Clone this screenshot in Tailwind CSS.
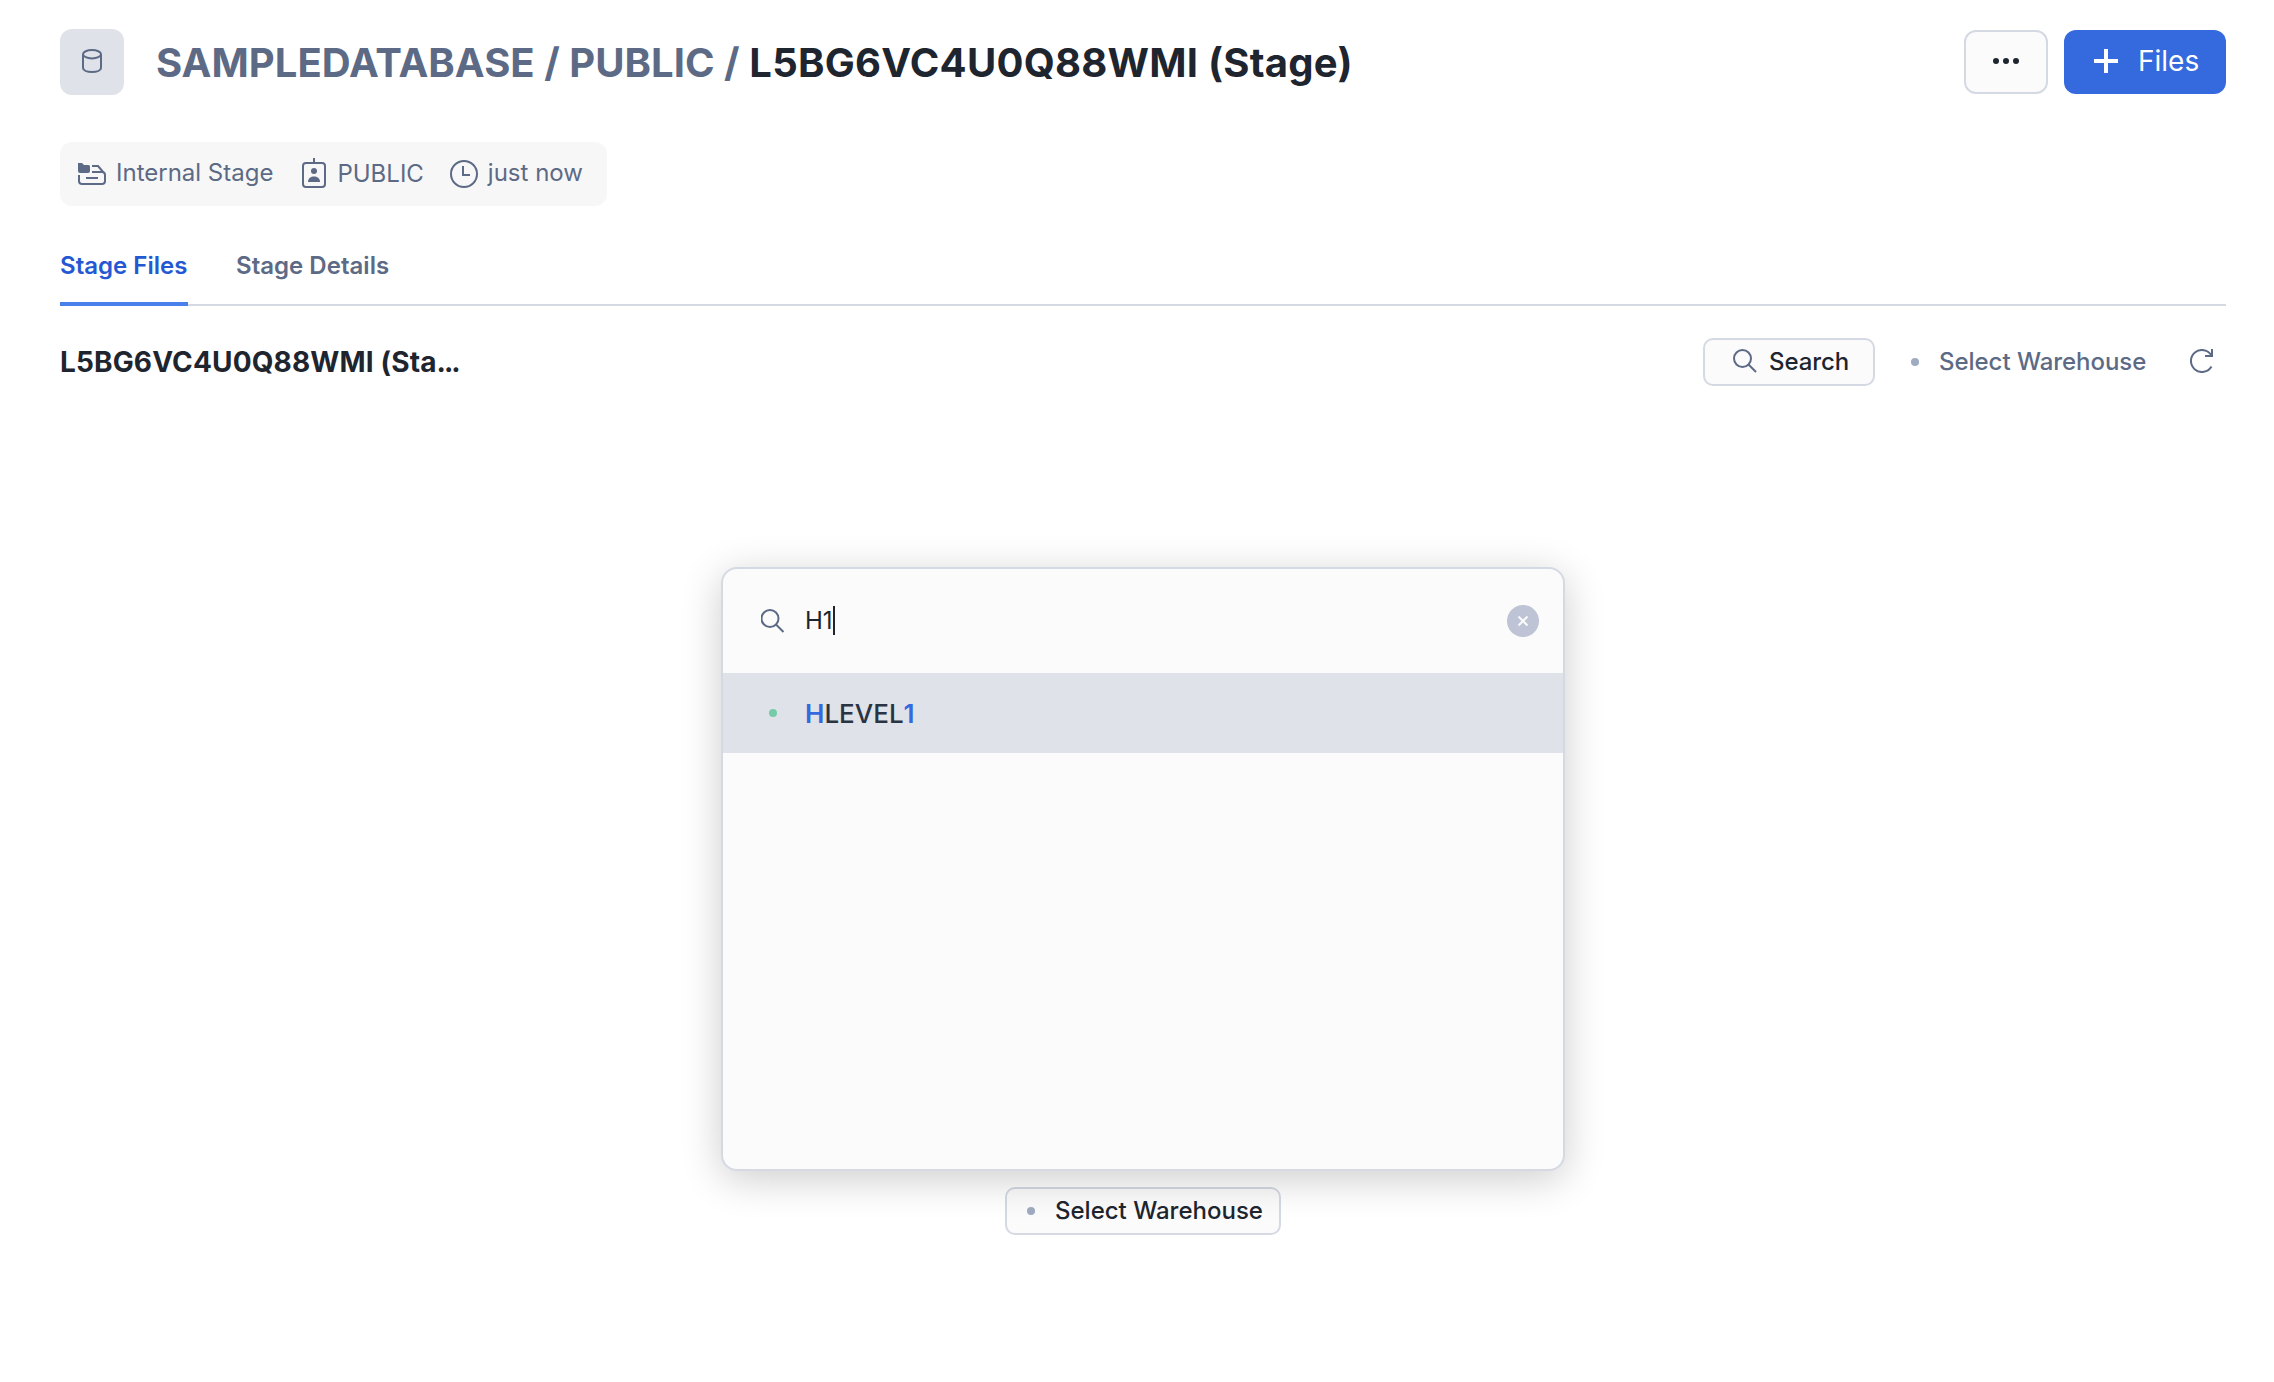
<!DOCTYPE html>
<html lang="en">
<head>
<meta charset="utf-8">
<title>Stage</title>
<script src="https://cdn.jsdelivr.net/npm/@tailwindcss/browser@4"></script>
</head>
<body class="bg-white font-[Inter,sans-serif] text-[#1e252f] text-2xl">
<div class="relative w-[2274px] h-[1382px] overflow-hidden px-12 pl-[60px] flex flex-col">
  <header class="mt-[29px] h-[66px] flex items-center">
    <div class="w-16 h-[66px] rounded-xl bg-[#dfe2e9] flex items-center justify-center pb-0.5">
      <svg class="w-5 h-6" viewBox="0 0 20 24" fill="none" stroke="#5d6a85" stroke-width="2"><ellipse cx="10" cy="5.200" rx="9" ry="4.200"/><path d="M1 5v13.500c0 2.800 4 4.500 9 4.500s9-1.700 9-4.500V5"/></svg>
    </div>
    <h1 class="ml-8 pt-0.5 text-[40px] leading-[48px] font-bold tracking-[0.25px] whitespace-nowrap"><span class="text-[#5d6a85] tracking-[0.03px]">SAMPLEDATABASE / PUBLIC /</span> L5BG6VC4U0Q88WMI (Stage)</h1>
    <div class="ml-auto flex gap-4 h-16">
      <button class="w-21 h-16 rounded-xl border-2 border-[#d5d9e4] bg-[#fbfbfb] flex items-center justify-center pb-0.5">
        <svg width="26" height="6" viewBox="0 0 26 6" fill="#1e252f"><circle cx="3" cy="3" r="3"/><circle cx="13" cy="3" r="3"/><circle cx="23" cy="3" r="3"/></svg>
      </button>
      <button class="w-[162px] h-16 rounded-xl bg-[#3569de] text-white flex items-center pl-[30px] pb-0.5">
        <svg width="24" height="24" viewBox="0 0 24 24" stroke="#fff" stroke-width="4"><path d="M12 0v24M0 12h24"/></svg>
        <span class="ml-5 pt-0.5 text-[28px]">Files</span>
      </button>
    </div>
  </header>

  <div class="mt-[47px] w-[547px] h-16 rounded-xl bg-[#f7f7f7] text-[#5d6a85] flex items-center pl-[18px] whitespace-nowrap">
    <svg width="28" height="24" viewBox="0 0 28 24" fill="none" stroke="#5d6a85" stroke-width="2"><path d="M0 1h4l2 2h4.500a1.500 1.500 0 0 1 1.500 1.500V9a2 2 0 0 1-2 2H2a2 2 0 0 1-2-2z" fill="#5d6a85" stroke="none"/><path d="M1 13v6a3 3 0 0 0 3 3h20a3 3 0 0 0 3-3v-6a3 3 0 0 0-3-3H14M14 4h6l6 7M8 16h12"/></svg>
    <span class="ml-2.5 pb-0.5">Internal Stage</span>
    <svg class="ml-[29px] -mt-0.5" width="24" height="32" viewBox="0 0 24 32" fill="none" stroke="#5d6a85" stroke-width="2"><rect x="1" y="6" width="22" height="24" rx="3"/><path d="M12 1v5"/><circle cx="12" cy="14" r="3" fill="#5d6a85" stroke="none"/><path d="M6 25c0-4 3-5.500 6-5.500s6 1.500 6 5.500z" fill="#5d6a85" stroke="none"/></svg>
    <span class="ml-[11px]">PUBLIC</span>
    <svg class="ml-[26px]" width="28" height="28" viewBox="0 0 28 28" fill="none" stroke="#5d6a85" stroke-width="2"><circle cx="14" cy="14" r="13"/><path d="M13 6v9h7"/></svg>
    <span class="ml-2.5 pb-0.5">just now</span>
  </div>

  <nav class="mt-[36px] h-16 flex gap-12 border-b-2 border-[#d5d9e4] font-semibold tracking-[0.02px] whitespace-nowrap">
    <div class="h-16 w-32 border-b-4 border-[#4a80ec] text-[#2458d3] pt-2">Stage Files</div>
    <div class="text-[#5d6a85] pt-2">Stage Details</div>
  </nav>

  <div class="mt-8 h-12 flex items-center whitespace-nowrap">
    <h2 class="pt-0.5 text-[28px] font-bold tracking-[0.14px]">L5BG6VC4U0Q88WMI (Sta<span class="tracking-[-2px]">...</span></h2>
    <button class="ml-auto w-[172px] h-12 rounded-[10px] border-2 border-[#d5d9e4] bg-[#fbfbfb] font-medium flex items-center pl-7">
      <svg class="-mt-0.5" width="24" height="24" viewBox="0 0 24 24" fill="none" stroke="#5d6a85" stroke-width="2"><circle cx="9.500" cy="9.500" r="8.500"/><path d="M15.500 15.500l7.500 7.500"/></svg>
      <span class="ml-3 tracking-[-0.1px]">Search</span>
    </button>
    <span class="ml-9 size-2 rounded-full bg-[#9fabc1]"></span>
    <span class="ml-5 w-[207px] font-medium tracking-[-0.04px] text-[#5d6a85]">Select Warehouse</span>
    <svg class="ml-11 mr-3 -mt-0.5" width="24" height="24" viewBox="0 0 24 24" fill="none" stroke="#5d6a85" stroke-width="2"><path d="M21.500 17.500A11 11 0 1 1 21.500 6.500M22 0v7h-7"/></svg>
  </div>

  <button class="absolute left-[1005px] top-[1187px] w-[276px] h-12 rounded-[10px] border-2 border-[#d5d9e4] bg-[#fbfbfb] font-medium flex items-center pl-5 whitespace-nowrap">
    <span class="size-2 rounded-full bg-[#9fabc1]"></span><span class="ml-5">Select Warehouse</span>
  </button>

  <div class="absolute left-[721px] top-[567px] w-[844px] h-[604px] rounded-2xl border-2 border-[#d5d9e4] bg-[#fbfbfb] shadow-[0_8px_40px_rgba(0,0,0,0.2)]">
    <div class="h-[104px] flex items-center pl-[38px] pr-6">
      <svg width="24" height="24" viewBox="0 0 24 24" fill="none" stroke="#5d6a85" stroke-width="2"><circle cx="9" cy="9.500" r="8.500"/><path d="M15 15.500l7.500 7.500"/></svg>
      <span class="ml-5">H1</span><span class="mb-0.5 w-0.5 h-[29px] bg-[#1e252f]"></span>
      <span class="ml-auto size-8 rounded-full bg-[#bec3d5] flex items-center justify-center"><svg width="12" height="12" viewBox="0 0 12 12" stroke="#fbfbfb" stroke-width="2"><path d="M1.500 1.500l9 9M10.500 1.500l-9 9"/></svg></span>
    </div>
    <div class="h-20 bg-[#dfe2e9] flex items-center pl-[46px] text-[26px] text-[#2a3342] font-medium">
      <span class="size-2 rounded-full bg-[#75cba8]"></span>
      <span class="ml-7 pt-0.5"><span class="text-[#3569de] font-semibold">H</span>LEVEL<span class="text-[#3569de] font-semibold">1</span></span>
    </div>
  </div>
</div>
</body>
</html>
